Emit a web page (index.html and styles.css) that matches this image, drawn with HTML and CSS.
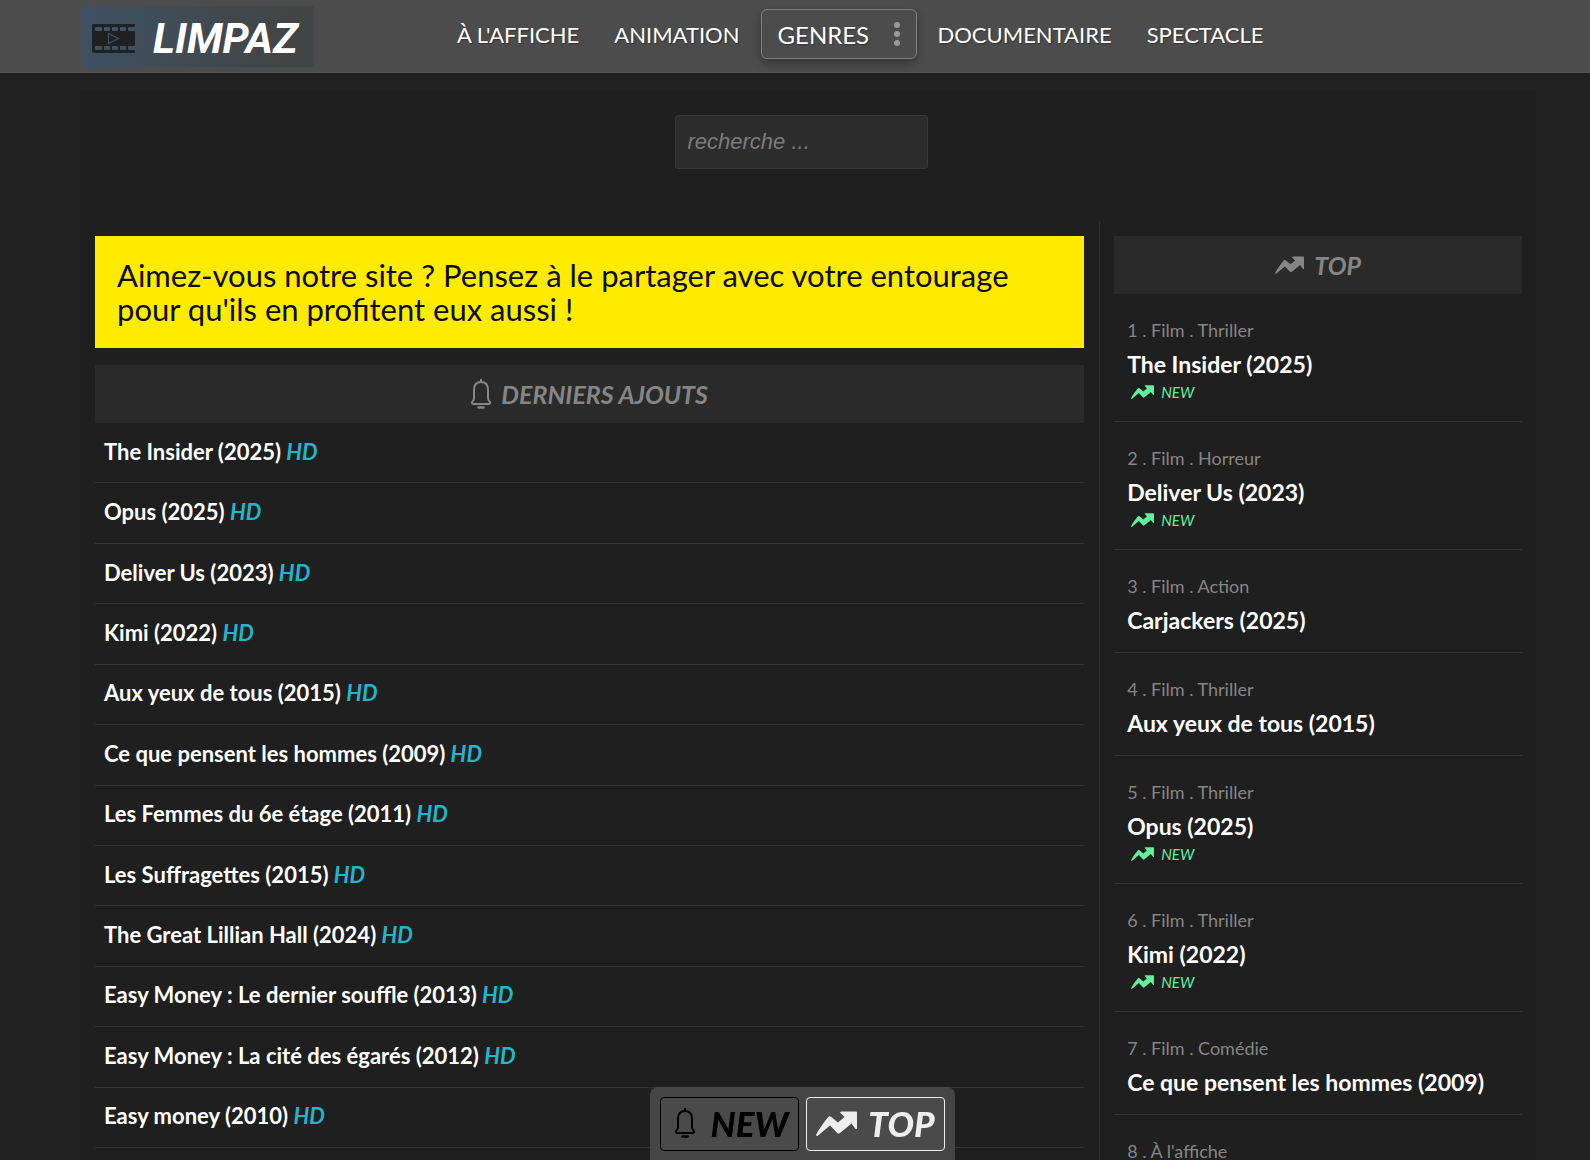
FILE: index.html
```html
<!DOCTYPE html>
<html lang="fr">
<head>
<meta charset="utf-8">
<meta name="viewport" content="width=device-width, initial-scale=1">
<title>Limpaz</title>
<link rel="stylesheet" href="styles.css">
</head>
<body>
<svg class="sprite" aria-hidden="true">
  <symbol id="bell" viewBox="0 0 20 30">
    <path d="M10 0v3M3 19V11C3 5.500 6 3 10 3s7 2.500 7 8v8q0 2 1.300 3.200c1.400 1.400.7 2.800-.8 2.800h-15c-1.500 0-2.200-1.400-.8-2.800Q3 21 3 19z" fill="none" stroke="currentColor" stroke-width="2"/>
    <path d="M7.500 28.500h5" fill="none" stroke="currentColor" stroke-width="2.400" stroke-linecap="round"/>
  </symbol>
  <symbol id="trend" viewBox="0 0 41 25">
    <path d="M.3 23.500C3 18 8.500 10.500 12.300 6q1.200-1.500 2.700-.2L22 11.500 28.500 6 24 1.500 25 .5h15Q41 .5 41 1.500V18h-1.500L35.500 12.500 24 22q-1.500 1.200-2.800 0L14 14.500 1.500 25Q-.3 25.200.3 23.500z" fill="currentColor"/>
  </symbol>
</svg>
<header class="header">
  <a class="logo" href="#">
    <svg class="logo-icon" viewBox="0 0 43 29" aria-hidden="true">
      <path d="M2 0h41v2.500h-1v5h1v14h-1v5h1V29H2q-2 0-2-2V2q0-2 2-2z" fill="#1f2021"/>
      <g fill="#405263">
        <rect x="3" y="3" width="7" height="4" rx="1"/><rect x="12" y="3" width="6" height="4" rx="1"/><rect x="20" y="3" width="6" height="4" rx="1"/><rect x="28" y="3" width="6" height="4" rx="1"/><rect x="36" y="3" width="7" height="4" rx="1"/>
        <rect x="3" y="22" width="7" height="4" rx="1"/><rect x="12" y="22" width="6" height="4" rx="1"/><rect x="20" y="22" width="6" height="4" rx="1"/><rect x="28" y="22" width="6" height="4" rx="1"/><rect x="36" y="22" width="7" height="4" rx="1"/>
      </g>
      <path d="M16.500 9.500v10l10-5z" fill="none" stroke="#405263" stroke-width="1.200"/>
    </svg>
    <span>LIMPAZ</span>
  </a>
  <nav class="nav">
    <a href="#">À L'AFFICHE</a>
    <a href="#">ANIMATION</a>
    <button class="genres" type="button">GENRES
      <svg class="dots" viewBox="0 0 6 24" aria-hidden="true"><circle cx="3" cy="3" r="3"/><circle cx="3" cy="12" r="3"/><circle cx="3" cy="21" r="3"/></svg>
    </button>
    <a href="#">DOCUMENTAIRE</a>
    <a href="#">SPECTACLE</a>
  </nav>
</header>
<main class="page">
  <form class="search"><input type="search" placeholder="recherche ..." aria-label="recherche"></form>
  <div class="columns">
    <section class="latest">
      <p class="notice">Aimez-vous notre site ? Pensez à le partager avec votre entourage pour qu'ils en profitent eux aussi !</p>
      <h2 class="bar"><svg class="bar-bell"><use href="#bell"/></svg>DERNIERS AJOUTS</h2>
      <ul class="films">
        <li><a href="#">The Insider (2025) <em>HD</em></a></li>
        <li><a href="#">Opus (2025) <em>HD</em></a></li>
        <li><a href="#">Deliver Us (2023) <em>HD</em></a></li>
        <li><a href="#">Kimi (2022) <em>HD</em></a></li>
        <li><a href="#">Aux yeux de tous (2015) <em>HD</em></a></li>
        <li><a href="#">Ce que pensent les hommes (2009) <em>HD</em></a></li>
        <li><a href="#">Les Femmes du 6e étage (2011) <em>HD</em></a></li>
        <li><a href="#">Les Suffragettes (2015) <em>HD</em></a></li>
        <li><a href="#">The Great Lillian Hall (2024) <em>HD</em></a></li>
        <li><a href="#">Easy Money : Le dernier souffle (2013) <em>HD</em></a></li>
        <li><a href="#">Easy Money : La cité des égarés (2012) <em>HD</em></a></li>
        <li><a href="#">Easy money (2010) <em>HD</em></a></li>
      </ul>
    </section>
    <aside class="top">
      <h2 class="bar"><svg class="bar-trend"><use href="#trend"/></svg>TOP</h2>
      <ol class="ranking">
        <li><p>1 . Film . Thriller</p><a href="#">The Insider (2025)</a><div class="new"><svg><use href="#trend"/></svg>NEW</div></li>
        <li><p>2 . Film . Horreur</p><a href="#">Deliver Us (2023)</a><div class="new"><svg><use href="#trend"/></svg>NEW</div></li>
        <li><p>3 . Film . Action</p><a href="#">Carjackers (2025)</a></li>
        <li><p>4 . Film . Thriller</p><a href="#">Aux yeux de tous (2015)</a></li>
        <li><p>5 . Film . Thriller</p><a href="#">Opus (2025)</a><div class="new"><svg><use href="#trend"/></svg>NEW</div></li>
        <li><p>6 . Film . Thriller</p><a href="#">Kimi (2022)</a><div class="new"><svg><use href="#trend"/></svg>NEW</div></li>
        <li><p>7 . Film . Comédie</p><a href="#">Ce que pensent les hommes (2009)</a></li>
        <li><p>8 . À l'affiche</p></li>
      </ol>
    </aside>
  </div>
</main>
<div class="dock">
  <div class="dock-panel">
    <button class="dock-new" type="button"><svg class="dock-bell"><use href="#bell"/></svg>NEW</button>
    <button class="dock-top" type="button"><svg class="dock-trend"><use href="#trend"/></svg>TOP</button>
  </div>
</div>
</body>
</html>
```
FILE: styles.css
```css
* { box-sizing: border-box; }
body {
  margin: 0;
  background: #212121;
  color: #fff;
  font-family: Lato, "Open Sans", sans-serif;
  overflow-x: hidden;
}
a { color: inherit; text-decoration: none; }
p, h2, ul, ol { margin: 0; padding: 0; list-style: none; }
button { font-family: inherit; cursor: pointer; }
.sprite { display: none; }

.header {
  display: flex;
  align-items: flex-start;
  height: 73px;
  padding: 6px 54px 0 81px;
  background: #4c4c4c;
  border-bottom: 1px solid #555;
}
.logo {
  display: flex;
  align-items: center;
  gap: 18px;
  width: 233px;
  height: 61px;
  padding: 4px 11px 0;
  border-radius: 3px;
  background: linear-gradient(100deg, #3e5163, #424545 85%);
  font: italic 700 42px/56px Roboto, sans-serif;
}
.logo-icon { width: 43px; height: 29px; flex: none; }
.nav {
  display: flex;
  align-items: center;
  gap: 35px;
  height: 56px;
  margin-left: 143px;
  font-size: 22px;
  text-shadow: 1px 1px 1px #333;
}
.genres {
  display: flex;
  align-items: center;
  justify-content: space-between;
  width: 156px;
  height: 50px;
  margin: 0 -14px;
  padding: 0 16px;
  border: 1px solid #808080;
  border-radius: 6px;
  background: #4c4c4c;
  color: #fff;
  font-size: 24px;
  text-shadow: inherit;
  box-shadow: 0 4px 8px rgba(0, 0, 0, .3);
}
.dots { width: 6px; height: 24px; fill: #999; }

.page {
  margin: 17px 54px 0 80px;
  background: #1f1f1f;
}
.search {
  display: flex;
  justify-content: center;
  padding: 25px 14px 52px 0;
}
.search input {
  width: 253px;
  height: 54px;
  padding: 0 12px;
  border: 1px solid #383838;
  border-radius: 3px;
  background: #2c2c2c;
  color: #fff;
  font: italic 22px "Liberation Sans", sans-serif;
}
.search input::placeholder { color: #7c7c7c; }

.columns { display: grid; grid-template-columns: 7fr 3fr; }
.latest { padding: 15px 15px 0; }
.top { padding: 15px 14px 0; border-left: 1px solid #303030; }
.notice {
  margin-bottom: 17px;
  padding: 22px;
  background: #ffeb00;
  color: #0c0c0c;
  font-size: 31px;
  line-height: 34px;
}
.bar {
  display: flex;
  align-items: center;
  justify-content: center;
  gap: 10px;
  height: 58px;
  background: #2a2a2a;
  color: #868686;
  font: italic 700 25px/30px Lato, sans-serif;
}
.bar-bell { width: 20px; height: 30px; }
.bar-trend { width: 29px; height: 18px; }

.films {
  display: grid;
  grid-auto-rows: 1fr;
  min-height: 725px;
  font-size: 22px;
  font-weight: 700;
}
.films li {
  display: flex;
  align-items: center;
  padding: 0 9px 3px;
  border-bottom: 1px solid #333;
}
.films em { color: #24b5cc; }

.ranking li {
  padding: 24px 13px 14px;
  border-bottom: 1px solid #333;
}
.ranking p { margin-bottom: 4px; color: #868686; font-size: 18px; line-height: 24px; }
.ranking a { display: block; font-size: 23px; font-weight: 700; line-height: 36px; }
.new {
  display: flex;
  align-items: center;
  gap: 7px;
  height: 20px;
  margin: 0 4px 5px;
  color: #5ff29a;
  font-size: 15px;
  font-style: italic;
}
.new svg { width: 23px; height: 14px; }

.dock {
  position: fixed;
  right: 0;
  bottom: 0;
  left: 0;
  display: flex;
  justify-content: center;
  padding-left: 14px;
}
.dock-panel {
  display: flex;
  gap: 7px;
  padding: 10px 10px 9px;
  border-radius: 8px 8px 0 0;
  background: rgba(72, 72, 72, .94);
}
.dock button {
  display: flex;
  align-items: center;
  justify-content: space-between;
  width: 139px;
  height: 54px;
  padding: 0 9px 2px;
  border-radius: 4px;
  background: #4a4a4a;
  font-size: 35px;
  font-style: italic;
  font-weight: 900;
}
.dock .dock-new { padding-left: 14px; border: 1px solid #000; color: #000; }
.dock .dock-top { border: 1px solid #eee; color: #eee; }
.dock-bell { width: 20px; height: 30px; }
.dock-trend { width: 41px; height: 25px; }
```
